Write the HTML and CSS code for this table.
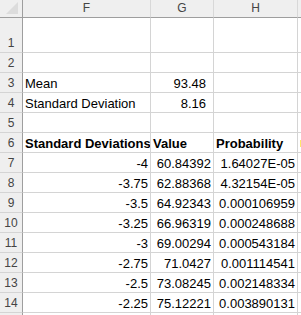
FILE: index.html
```html
<!DOCTYPE html>
<html lang="en">
<head>
  <meta charset="UTF-8">
  <meta name="viewport" content="width=device-width, initial-scale=1.0">
  <title>Normal Distribution</title>
  <link rel="stylesheet" href="styles.css">
</head>
<body>
  <div class="sheet">
    <div class="row head">
      <div class="corner">
        <svg width="22" height="17" viewBox="0 0 22 17"><polygon points="18,2 18,14 6,14" fill="#dcdcdc"/></svg>
      </div>
      <div>F</div>
      <div>G</div>
      <div>H</div>
      <div></div>
    </div>

    <div class="row tall">
      <div class="num">1</div><div></div><div></div><div></div><div></div>
    </div>
    <div class="row">
      <div class="num">2</div><div></div><div></div><div></div><div></div>
    </div>
    <div class="row">
      <div class="num">3</div><div>Mean</div><div class="r pad">93.48</div><div></div><div></div>
    </div>
    <div class="row">
      <div class="num">4</div><div>Standard Deviation</div><div class="r pad">8.16</div><div></div><div></div>
    </div>
    <div class="row">
      <div class="num">5</div><div></div><div></div><div></div><div></div>
    </div>
    <div class="row bold">
      <div class="num">6</div><div>Standard Deviations</div><div>Value</div><div>Probability</div><div><span class="mark"></span></div>
    </div>

    <div class="row">
      <div class="num">7</div><div class="r">-4</div><div class="r">60.84392</div><div class="r">1.64027E-05</div><div></div>
    </div>
    <div class="row">
      <div class="num">8</div><div class="r">-3.75</div><div class="r">62.88368</div><div class="r">4.32154E-05</div><div></div>
    </div>
    <div class="row">
      <div class="num">9</div><div class="r">-3.5</div><div class="r">64.92343</div><div class="r">0.000106959</div><div></div>
    </div>
    <div class="row">
      <div class="num">10</div><div class="r">-3.25</div><div class="r">66.96319</div><div class="r">0.000248688</div><div></div>
    </div>
    <div class="row">
      <div class="num">11</div><div class="r">-3</div><div class="r">69.00294</div><div class="r">0.000543184</div><div></div>
    </div>
    <div class="row">
      <div class="num">12</div><div class="r">-2.75</div><div class="r">71.0427</div><div class="r">0.001114541</div><div></div>
    </div>
    <div class="row">
      <div class="num">13</div><div class="r">-2.5</div><div class="r">73.08245</div><div class="r">0.002148334</div><div></div>
    </div>
    <div class="row">
      <div class="num">14</div><div class="r">-2.25</div><div class="r">75.12221</div><div class="r">0.003890131</div><div></div>
    </div>
    <div class="row">
      <div class="num"></div><div></div><div></div><div></div><div></div>
    </div>
  </div>
</body>
</html>
```

FILE: styles.css
```css
body {
  margin: 0;
  background: #fff;
  font-family: "Liberation Sans", Arial, sans-serif;
  font-size: 13px;
  color: #000;
}
.sheet {
  width: 301px;
  height: 315px;
  overflow: hidden;
}
.row {
  display: grid;
  grid-template-columns: 23px 128px 63px 84px 30px;
  height: 20px;
}
.row > div {
  box-sizing: border-box;
  display: flex;
  align-items: flex-end;
  padding: 0 2px 2px;
  line-height: 1;
  white-space: nowrap;
  overflow: hidden;
  border-right: 1px solid #d4d4d4;
  border-bottom: 1px solid #d4d4d4;
}
.tall {
  height: 35px;
}
.bold {
  font-weight: bold;
}

/* column letters */
.head {
  height: 18px;
  background: #efefef;
}
.head > div {
  align-items: center;
  justify-content: center;
  padding: 0 0 1px;
  font-size: 12px;
  color: #444;
  border-bottom-color: #9e9e9e;
  border-right-color: #d8d8d8;
}
.head > .corner {
  padding: 0;
  border-right-color: #9e9e9e;
}

/* row numbers */
.row > .num {
  justify-content: center;
  padding: 0 0 3px;
  background: #efefef;
  font-size: 12px;
  font-weight: normal;
  color: #444;
  border-right-color: #9e9e9e;
}
.row > .r {
  justify-content: flex-end;
}
.row > .pad {
  padding-right: 7px;
}
.mark {
  display: inline-block;
  width: 2px;
  height: 7px;
  margin-bottom: 3px;
  background: #ffe86a;
}
```
